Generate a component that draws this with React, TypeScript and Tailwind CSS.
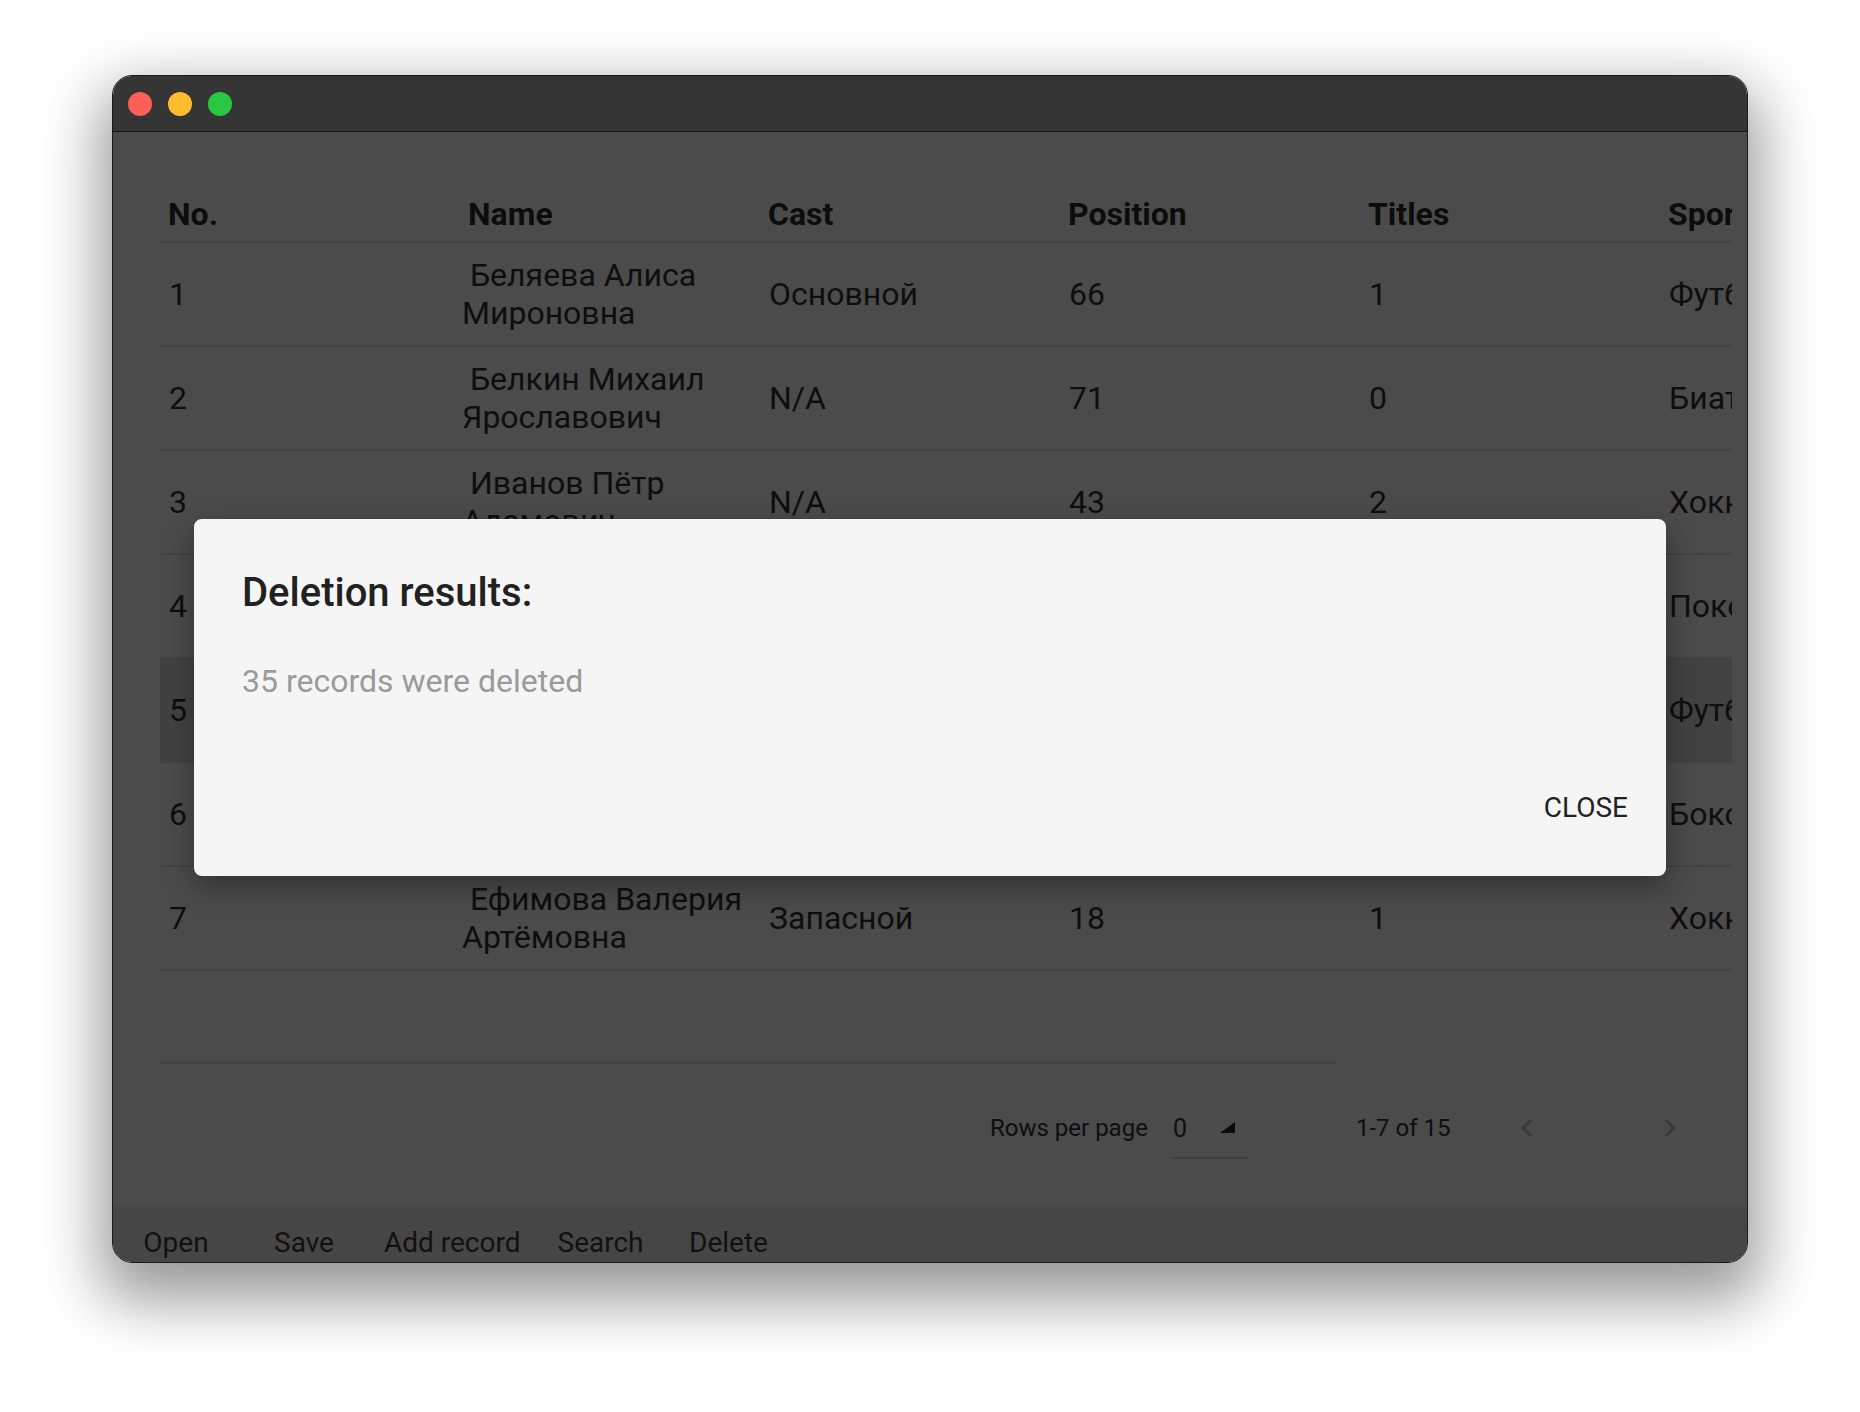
import React from "react";

type Row = {
  no: string;
  name: string;
  cast: string;
  pos: string;
  titles: string;
  sport: string;
  team: string;
};

const rows: Row[] = [
  { no: "1", name: "\u00A0Беляева Алиса Мироновна", cast: "Основной", pos: "66", titles: "1", sport: "Футбол", team: "Спартак" },
  { no: "2", name: "\u00A0Белкин Михаил Ярославович", cast: "N/A", pos: "71", titles: "0", sport: "Биатлон", team: "Динамо" },
  { no: "3", name: "\u00A0Иванов Пётр Адамович", cast: "N/A", pos: "43", titles: "2", sport: "Хоккей", team: "ЦСКА" },
  { no: "4", name: "\u00A0Смирнов Андрей Ильич", cast: "Основной", pos: "12", titles: "3", sport: "Покер", team: "Зенит" },
  { no: "5", name: "\u00A0Козлова Мария Олеговна", cast: "Запасной", pos: "27", titles: "0", sport: "Футбол", team: "Локомотив" },
  { no: "6", name: "\u00A0Орлов Денис Сергеевич", cast: "N/A", pos: "35", titles: "4", sport: "Бокс", team: "Торпедо" },
  { no: "7", name: "\u00A0Ефимова Валерия Артёмовна", cast: "Запасной", pos: "18", titles: "1", sport: "Хоккей", team: "Ак Барс" },
];

const headers = ["No.", "Name", "Cast", "Position", "Titles", "Sport", "Team"];

function ChevronLeft() {
  return (
    <svg width="36" height="36" viewBox="0 0 24 24" fill="#3a3a3a">
      <path d="M15.41 7.41L14 6l-6 6 6 6 1.41-1.41L10.83 12z" />
    </svg>
  );
}

function ChevronRight() {
  return (
    <svg width="36" height="36" viewBox="0 0 24 24" fill="#3a3a3a">
      <path d="M10 6L8.59 7.41 13.17 12l-4.58 4.59L10 18l6-6z" />
    </svg>
  );
}

export default function App() {
  const font = { fontFamily: "Roboto, 'Noto Sans', sans-serif" };
  return (
    <div className="w-[1860px] h-[1412px] bg-white pl-[112px] pt-[75px]" style={font}>
      <div className="relative w-[1636px] h-[1188px] rounded-[20px] border border-[#1a1a1a] overflow-hidden flex flex-col shadow-[0_26px_60px_12px_rgba(0,0,0,0.4)]">
        {/* Title bar */}
        <div className="h-[56px] shrink-0 bg-[#353535] border-b border-[#151515] flex items-center pl-[15px] gap-[16px]">
          <div className="w-[24px] h-[24px] rounded-full bg-[#fe5f57]" />
          <div className="w-[24px] h-[24px] rounded-full bg-[#febc2e]" />
          <div className="w-[24px] h-[24px] rounded-full bg-[#28c840]" />
        </div>

        {/* Content */}
        <div className="flex-1 bg-[#4b4b4b] flex flex-col">
          <div className="ml-[47px] mr-[15px] pt-[55px] overflow-hidden">
            <div className="w-[2100px]">
              {/* Header */}
              <div className="flex h-[56px] border-b-2 border-[#434343] items-center">
                {headers.map((h) => (
                  <div key={h} className="w-[300px] shrink-0 pl-[8px] text-[32px] leading-[38px] font-bold text-[#0c0c0c]">
                    {h}
                  </div>
                ))}
              </div>
              {rows.map((r) => (
                <div
                  key={r.no}
                  className={`flex h-[104px] border-b-2 border-[#434343] items-center text-[32px] leading-[38px] text-[#0e0e0e] ${
                    r.no === "5" ? "bg-[#424242]" : ""
                  }`}
                >
                  <div className="w-[300px] shrink-0 pl-[9px]">{r.no}</div>
                  <div className="w-[300px] shrink-0 pl-[2px] pr-[6px]">{r.name}</div>
                  <div className="w-[300px] shrink-0 pl-[9px]">{r.cast}</div>
                  <div className="w-[300px] shrink-0 pl-[9px]">{r.pos}</div>
                  <div className="w-[300px] shrink-0 pl-[9px]">{r.titles}</div>
                  <div className="w-[300px] shrink-0 pl-[9px]">{r.sport}</div>
                  <div className="w-[300px] shrink-0 pl-[9px]">{r.team}</div>
                </div>
              ))}
            </div>
          </div>

          {/* horizontal scroll indicator */}
          <div className="ml-[47px] mt-[90px] w-[1177px] h-[3px] bg-[#444444]" />

          {/* Pagination */}
          <div className="mt-[34px] h-[60px] flex items-center pl-[877px] text-[24px] text-[#0e0e0e]">
            <div className="w-[183px] shrink-0">Rows per page</div>
            <div className="relative w-[75px] h-[60px] shrink-0 flex items-center">
              <span className="text-[25px] mt-[2px]">0</span>
              <svg className="absolute left-[47px] top-[24px]" width="15" height="11" viewBox="0 0 15 11">
                <polygon points="15,0 15,11 0,11" fill="#0a0a0a" />
              </svg>
              <div className="absolute left-0 right-0 bottom-[-1px] h-[2px] bg-[#3f3f3f]" />
            </div>
            <div className="w-[108px] shrink-0" />
            <div className="w-[150px] shrink-0">1-7 of 15</div>
            <div className="w-[42px] shrink-0 flex items-center justify-center">
              <ChevronLeft />
            </div>
            <div className="w-[101px] shrink-0" />
            <div className="w-[42px] shrink-0 flex items-center justify-center">
              <ChevronRight />
            </div>
          </div>

          <div className="flex-1" />

          {/* Bottom toolbar */}
          <div className="h-[55px] shrink-0 bg-[#464646] flex items-start pt-[20px] text-[28px] leading-[32px] text-[#111111]">
            {["Open", "Save", "Add record", "Search", "Delete"].map((b) => (
              <div key={b} className="min-w-[128px] px-[16px] text-center first:-ml-[1px]">
                {b}
              </div>
            ))}
          </div>
        </div>

        {/* Dialog */}
        <div className="absolute left-[81px] top-[443px] w-[1472px] h-[357px] rounded-[8px] bg-[#f5f5f5] shadow-[0_10px_30px_rgba(0,0,0,0.35)] flex flex-col">
          <div className="pl-[48px] pt-[49px] text-[40px] leading-[50px] font-medium text-[#212121]">
            Deletion results:
          </div>
          <div className="pl-[48px] mt-[39px] text-[32px] leading-[48px] text-[#9a9a9a]">
            35 records were deleted
          </div>
          <div className="flex justify-end pr-[38px] mt-[87px]">
            <div className="text-[28px] leading-[32px] font-normal text-[#212121]">CLOSE</div>
          </div>
        </div>
      </div>
    </div>
  );
}
